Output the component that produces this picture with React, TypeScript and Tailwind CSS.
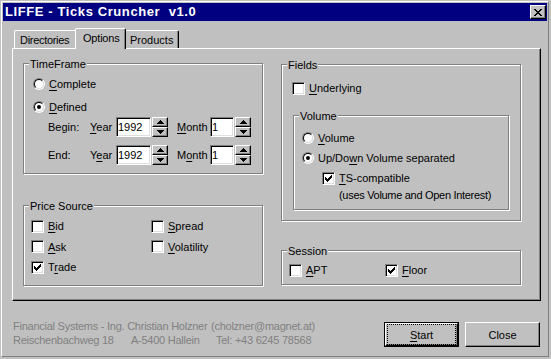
import React from "react";

const bevelOut =
  "border border-t-white border-l-white border-r-black border-b-black shadow-[inset_-1px_-1px_0_#808080]";
const sunken =
  "border border-t-[#808080] border-l-[#808080] border-r-white border-b-white shadow-[inset_1px_1px_0_#000,inset_-1px_-1px_0_#dfdfdf]";

function U({ children }: { children: React.ReactNode }) {
  return <span className="underline decoration-1 underline-offset-[2px]">{children}</span>;
}

function Check({ on }: { on?: boolean }) {
  return (
    <span className={`w-[13px] h-[13px] shrink-0 bg-white flex items-center justify-center ${sunken}`}>
      {on && (
        <svg width="7" height="7" viewBox="0 0 7 7" shapeRendering="crispEdges">
          <path
            d="M6 0h1v1h-1z M5 1h2v1h-2z M0 2h1v1h-1z M4 2h3v1h-3z M0 3h2v1h-2z M3 3h3v1h-3z M0 4h5v1h-5z M1 5h3v1h-3z M2 6h1v1h-1z"
            fill="#000"
          />
        </svg>
      )}
    </span>
  );
}

function Radio({ on }: { on?: boolean }) {
  return (
    <span className="w-[12px] h-[12px] shrink-0 rounded-full border border-t-[#808080] border-l-[#808080] border-r-white border-b-white flex">
      <span className="flex-1 rounded-full border border-t-black border-l-black border-r-[#dfdfdf] border-b-[#dfdfdf] bg-white flex items-center justify-center">
        {on && <span className="w-[4px] h-[4px] rounded-full bg-black" />}
      </span>
    </span>
  );
}

function CheckRow({ on, children, className }: { on?: boolean; children: React.ReactNode; className?: string }) {
  return (
    <div className={`flex items-center gap-[4px] ${className ?? ""}`}>
      <Check on={on} />
      <span className="whitespace-pre">{children}</span>
    </div>
  );
}

function RadioRow({ on, children, className }: { on?: boolean; children: React.ReactNode; className?: string }) {
  return (
    <div className={`flex items-center gap-[4px] ${className ?? ""}`}>
      <Radio on={on} />
      <span className="whitespace-pre">{children}</span>
    </div>
  );
}

function Group({ label, className, children }: { label: string; className?: string; children: React.ReactNode }) {
  return (
    <div className={`relative shrink-0 border border-[#808080] shadow-[inset_1px_1px_0_#fff,1px_1px_0_#fff] ${className ?? ""}`}>
      <span className="absolute left-[5px] -top-[7px] px-px bg-[#c0c0c0] leading-[14px] whitespace-pre">{label}</span>
      {children}
    </div>
  );
}

function Spin() {
  return (
    <div className="ml-px w-[16px] h-[20px] flex flex-col shrink-0">
      <div className={`h-[10px] bg-[#c0c0c0] flex items-center justify-center ${bevelOut}`}>
        <svg width="7" height="4" viewBox="0 0 7 4" shapeRendering="crispEdges">
          <path d="M3 0h1v1h-1z M2 1h3v1h-3z M1 2h5v1h-5z M0 3h7v1h-7z" fill="#000" />
        </svg>
      </div>
      <div className={`h-[10px] bg-[#c0c0c0] flex items-center justify-center ${bevelOut}`}>
        <svg width="7" height="4" viewBox="0 0 7 4" shapeRendering="crispEdges">
          <path d="M0 0h7v1h-7z M1 1h5v1h-5z M2 2h3v1h-3z M3 3h1v1h-1z" fill="#000" />
        </svg>
      </div>
    </div>
  );
}

function Field({ value, w }: { value: string; w: string }) {
  return (
    <div className={`${w} h-[20px] bg-white flex items-center pl-px shrink-0 ${sunken}`}>
      <span>{value}</span>
    </div>
  );
}

function DateRow({
  label,
  year,
  month,
  className,
}: {
  label: string;
  year: React.ReactNode;
  month: React.ReactNode;
  className?: string;
}) {
  return (
    <div className={`flex items-center h-[20px] pl-[24px] ${className ?? ""}`}>
      <span className="w-[42px] shrink-0">{label}</span>
      <span className="w-[26px] shrink-0">{year}</span>
      <Field value="1992" w="w-[35px]" />
      <Spin />
      <span className="w-[42px] pl-[9px] shrink-0">{month}</span>
      <Field value="1" w="w-[24px]" />
      <Spin />
    </div>
  );
}

export default function App() {
  return (
    <div className="w-[551px] h-[359px] bg-[#c0c0c0] pt-px pl-px overflow-hidden font-['Liberation_Sans',Arial,sans-serif] text-[11px] leading-[14px] text-black select-none">
      <div className="w-[548px] h-[356px] border border-t-white border-l-white border-r-[#808080] border-b-[#808080] p-px flex flex-col">
        {/* Title bar */}
        <div className="h-[18px] bg-[#000080] flex items-center pl-[2px] pr-px shrink-0">
          <span className="flex-1 text-white font-bold text-[13px] leading-[16px] tracking-[0.6px] whitespace-pre">
            LIFFE - Ticks Cruncher  v1.0
          </span>
          <div className={`w-[16px] h-[14px] bg-[#c0c0c0] flex items-center justify-center ${bevelOut}`}>
            <svg width="8" height="7" viewBox="0 0 8 7" shapeRendering="crispEdges">
              <path
                d="M0 0h2v1h-2z M6 0h2v1h-2z M1 1h2v1h-2z M5 1h2v1h-2z M2 2h4v1h-4z M3 3h2v1h-2z M2 4h4v1h-4z M1 5h2v1h-2z M5 5h2v1h-2z M0 6h2v1h-2z M6 6h2v1h-2z"
                fill="#000"
              />
            </svg>
          </div>
        </div>

        {/* Tabs + panel */}
        <div className="ml-[9px] mt-[7px] flex flex-col">
          <div className="h-[20px] flex items-end pl-[2px]">
            <div className="w-[61px] h-[18px] border-l border-t border-white rounded-tl-[2px] flex items-center pl-[5px] tracking-[-0.3px]">
              Directories
            </div>
            <div className="relative z-10 -mb-px w-[51px] h-[21px] bg-[#c0c0c0] border-l border-t border-white border-r border-r-black rounded-t-[2px] shadow-[inset_-1px_0_0_#808080] flex items-start pt-[2px] pl-[7px] tracking-[-0.2px]">
              Options
            </div>
            <div className="w-[53px] h-[18px] border-t border-white border-r border-r-black rounded-tr-[2px] shadow-[inset_-1px_0_0_#808080] flex items-center pl-[4px]">
              Products
            </div>
          </div>

          <div className="w-[529px] h-[253px] border border-t-white border-l-white border-r-black border-b-black shadow-[inset_-1px_-1px_0_#808080] flex pl-[10px] pt-[14px] gap-[18px]">
            {/* left column */}
            <div className="flex flex-col">
              <Group label="TimeFrame" className="w-[240px] h-[111px] pt-[10px]">
                <RadioRow className="h-[20px] pl-[9px]">
                  <U>C</U>omplete
                </RadioRow>
                <RadioRow on className="h-[20px] pl-[9px] mt-[3px]">
                  <U>D</U>efined
                </RadioRow>
                <DateRow
                  label="Begin:"
                  year={
                    <>
                      <U>Y</U>ear
                    </>
                  }
                  month={
                    <>
                      <U>M</U>onth
                    </>
                  }
                />
                <DateRow
                  className="mt-[8px]"
                  label="End:"
                  year={
                    <>
                      Y<U>e</U>ar
                    </>
                  }
                  month={
                    <>
                      M<U>o</U>nth
                    </>
                  }
                />
              </Group>

              <Group label="Price Source" className="mt-[31px] w-[240px] h-[81px] pt-[10px] pl-[7px]">
                <div className="grid grid-cols-[120px_1fr] grid-rows-[20px_21px_20px]">
                  <CheckRow>
                    <U>B</U>id
                  </CheckRow>
                  <CheckRow>
                    <U>S</U>pread
                  </CheckRow>
                  <CheckRow>
                    <U>A</U>sk
                  </CheckRow>
                  <CheckRow>
                    <U>V</U>olatility
                  </CheckRow>
                  <CheckRow on>
                    T<U>r</U>ade
                  </CheckRow>
                </div>
              </Group>
            </div>

            {/* right column */}
            <div className="flex flex-col pt-px">
              <Group label="Fields" className="w-[240px] h-[157px] pt-[13px] pl-[10px]">
                <CheckRow className="h-[20px]">
                  <U>U</U>nderlying
                </CheckRow>
                <Group label="Volume" className="mt-[17px] ml-px w-[216px] h-[95px] pt-[12px]">
                  <RadioRow className="h-[20px] pl-[8px]">
                    <U>V</U>olume
                  </RadioRow>
                  <RadioRow on className="h-[20px] pl-[8px]">
                    Up/Do<U>w</U>n Volume separated
                  </RadioRow>
                  <CheckRow on className="h-[20px] pl-[28px]">
                    <U>T</U>S-compatible
                  </CheckRow>
                  <div className="pl-[45px] whitespace-pre tracking-[-0.3px]">(uses Volume and Open Interest)</div>
                </Group>
              </Group>

              <Group label="Session" className="mt-[29px] w-[240px] h-[35px] pt-[9px] pl-[7px]">
                <div className="grid grid-cols-[96px_1fr] h-[20px]">
                  <CheckRow>
                    <U>A</U>PT
                  </CheckRow>
                  <CheckRow on>
                    <U>F</U>loor
                  </CheckRow>
                </div>
              </Group>
            </div>
          </div>
        </div>

        {/* Footer */}
        <div className="flex pl-[10px]">
          <div className="mt-[18px] w-[371px] text-[#808080] whitespace-pre tracking-[-0.25px]">
            <div className="flex">
              <span className="w-[198px] shrink-0">Financial Systems - Ing. Christian Holzner</span>
              <span>(cholzner@magnet.at)</span>
            </div>
            <div className="flex">
              <span className="w-[118px] shrink-0">Reischenbachweg 18</span>
              <span className="w-[85px] shrink-0">A-5400 Hallein</span>
              <span>Tel: +43 6245 78568</span>
            </div>
          </div>
          <div className="mt-[21px] flex gap-[6px]">
            <div className="w-[75px] h-[25px] border border-black flex">
              <div className="flex-1 border border-t-white border-l-white border-r-black border-b-black shadow-[inset_-1px_-1px_0_#808080] flex px-px">
                <div className="flex-1 border border-dotted border-black flex items-center justify-center">
                  <span>
                    <U>S</U>tart
                  </span>
                </div>
              </div>
            </div>
            <div className={`w-[75px] h-[25px] flex items-center justify-center ${bevelOut}`}>Close</div>
          </div>
        </div>
      </div>
    </div>
  );
}
